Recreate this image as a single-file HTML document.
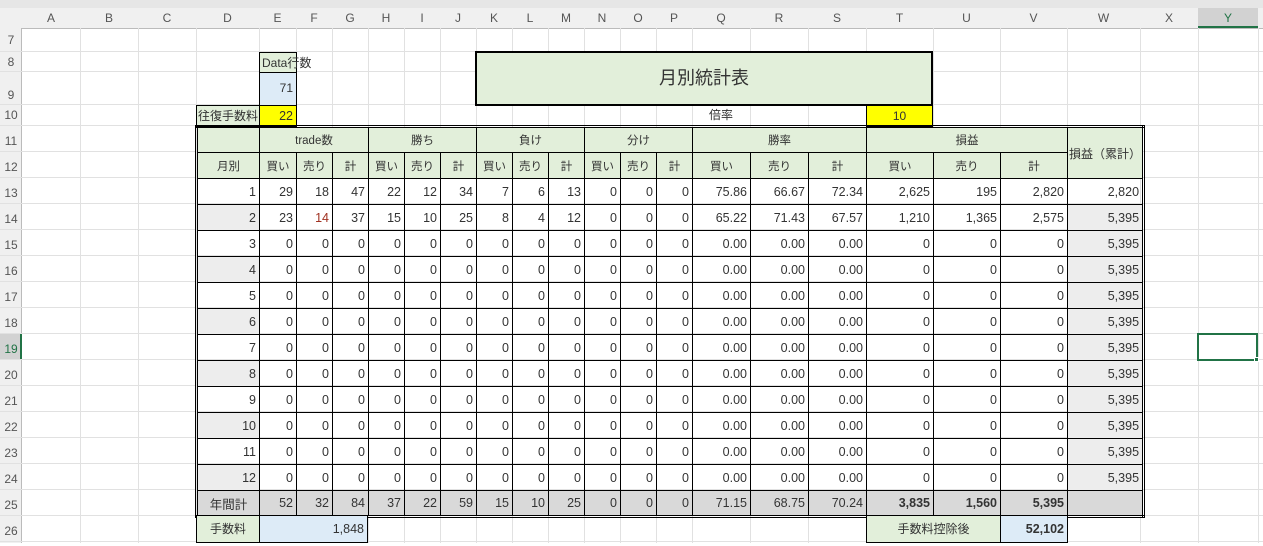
<!DOCTYPE html><html><head><meta charset="utf-8"><style>
body{margin:0;width:1263px;height:543px;overflow:hidden;background:#fff;font-family:"Liberation Sans","Noto Sans CJK JP",sans-serif;color:#333;position:relative}
.a{position:absolute;box-sizing:border-box}
.v{position:absolute;top:28px;height:515px;width:1px;background:#e1e1e1}
.h{position:absolute;left:0;width:1263px;height:1px;background:#e1e1e1}
.ch{position:absolute;top:8px;height:20px;font-size:12px;color:#555;text-align:center;line-height:20px}
.rh{position:absolute;left:0;width:22px;font-size:12px;color:#555;text-align:center}
table{border-collapse:collapse;table-layout:fixed;position:absolute;left:195px;top:125px;border:3px double #000}
td{border:1px solid #000;height:26px;padding:0 3px;font-size:12.5px;text-align:right;white-space:nowrap;overflow:hidden;box-sizing:border-box}
.g td,td.g{background:#e2efda;text-align:center;font-size:11.5px}
td.m{background:#ededed}
tr.t td{background:#d9d9d9}
td.b{font-weight:bold}
</style></head><body>
<div class="a" style="left:0;top:0;width:1263px;height:8px;background:#e6e6e6"></div>
<div class="a" style="left:0;top:8px;width:1263px;height:21px;background:#f0f0f0;border-bottom:1px solid #bbb"></div>
<div class="a" style="left:0;top:28px;width:22px;height:515px;background:#f0f0f0;border-right:1px solid #bbb"></div>
<div class="a" style="left:1198px;top:8px;width:60px;height:20px;background:#d2d2d2;border-bottom:2px solid #217346"></div>
<div class="a" style="left:0;top:334px;width:22px;height:26px;background:#d2d2d2;border-right:2px solid #217346"></div>
<div class="ch" style="left:22px;width:58px">A</div><div class="ch" style="left:80px;width:58px">B</div><div class="ch" style="left:138px;width:58px">C</div><div class="ch" style="left:196px;width:63px">D</div><div class="ch" style="left:259px;width:37px">E</div><div class="ch" style="left:296px;width:36px">F</div><div class="ch" style="left:332px;width:36px">G</div><div class="ch" style="left:368px;width:36px">H</div><div class="ch" style="left:404px;width:36px">I</div><div class="ch" style="left:440px;width:36px">J</div><div class="ch" style="left:476px;width:36px">K</div><div class="ch" style="left:512px;width:36px">L</div><div class="ch" style="left:548px;width:36px">M</div><div class="ch" style="left:584px;width:36px">N</div><div class="ch" style="left:620px;width:36px">O</div><div class="ch" style="left:656px;width:36px">P</div><div class="ch" style="left:692px;width:58px">Q</div><div class="ch" style="left:750px;width:58px">R</div><div class="ch" style="left:808px;width:58px">S</div><div class="ch" style="left:866px;width:67px">T</div><div class="ch" style="left:933px;width:67px">U</div><div class="ch" style="left:1000px;width:67px">V</div><div class="ch" style="left:1067px;width:73px">W</div><div class="ch" style="left:1140px;width:58px">X</div><div class="ch" style="left:1198px;width:60px;color:#217346">Y</div>
<div class="v" style="left:80px"></div><div class="v" style="left:138px"></div><div class="v" style="left:196px"></div><div class="v" style="left:259px"></div><div class="v" style="left:296px"></div><div class="v" style="left:332px"></div><div class="v" style="left:368px"></div><div class="v" style="left:404px"></div><div class="v" style="left:440px"></div><div class="v" style="left:476px"></div><div class="v" style="left:512px"></div><div class="v" style="left:548px"></div><div class="v" style="left:584px"></div><div class="v" style="left:620px"></div><div class="v" style="left:656px"></div><div class="v" style="left:692px"></div><div class="v" style="left:750px"></div><div class="v" style="left:808px"></div><div class="v" style="left:866px"></div><div class="v" style="left:933px"></div><div class="v" style="left:1000px"></div><div class="v" style="left:1067px"></div><div class="v" style="left:1140px"></div><div class="v" style="left:1198px"></div><div class="v" style="left:1258px"></div>
<div class="h" style="top:51px"></div><div class="h" style="top:71px"></div><div class="h" style="top:104px"></div><div class="h" style="top:125px"></div><div class="h" style="top:151px"></div><div class="h" style="top:177px"></div><div class="h" style="top:203px"></div><div class="h" style="top:229px"></div><div class="h" style="top:255px"></div><div class="h" style="top:281px"></div><div class="h" style="top:307px"></div><div class="h" style="top:333px"></div><div class="h" style="top:359px"></div><div class="h" style="top:385px"></div><div class="h" style="top:411px"></div><div class="h" style="top:437px"></div><div class="h" style="top:463px"></div><div class="h" style="top:489px"></div><div class="h" style="top:515px"></div><div class="h" style="top:541px"></div>
<div class="rh" style="top:29px;line-height:23px">7</div><div class="rh" style="top:52px;line-height:20px">8</div><div class="rh" style="top:72px;line-height:46px">9</div><div class="rh" style="top:105px;line-height:21px">10</div>
<div class="rh" style="top:126px;line-height:30px">11</div><div class="rh" style="top:152px;line-height:30px">12</div><div class="rh" style="top:178px;line-height:30px">13</div><div class="rh" style="top:204px;line-height:30px">14</div><div class="rh" style="top:230px;line-height:30px">15</div><div class="rh" style="top:256px;line-height:30px">16</div><div class="rh" style="top:282px;line-height:30px">17</div><div class="rh" style="top:308px;line-height:30px">18</div><div class="rh" style="top:334px;line-height:30px;color:#217346">19</div><div class="rh" style="top:360px;line-height:30px">20</div><div class="rh" style="top:386px;line-height:30px">21</div><div class="rh" style="top:412px;line-height:30px">22</div><div class="rh" style="top:438px;line-height:30px">23</div><div class="rh" style="top:464px;line-height:30px">24</div><div class="rh" style="top:490px;line-height:30px">25</div><div class="rh" style="top:516px;line-height:30px">26</div>
<div class="a" style="left:259px;top:52px;width:38px;height:21px;background:#e2efda;border:1px solid #000;border-bottom:none;font-size:12px;line-height:20px;padding-left:2px;white-space:nowrap">Data行数</div>
<div class="a" style="left:259px;top:72px;width:38px;height:34px;background:#ddebf7;border:1px solid #000;font-size:12px;text-align:right;padding:4px 3px 0 0;line-height:22px">71</div>
<div class="a" style="left:196px;top:105px;width:64px;height:22px;background:#e2efda;border:1px solid #000;font-size:12px;line-height:20px;padding-left:1px;white-space:nowrap">往復手数料</div>
<div class="a" style="left:259px;top:105px;width:38px;height:22px;background:#ff0;border:1px solid #000;font-size:12.5px;line-height:20px;text-align:right;padding-right:3px">22</div>
<div class="a" style="left:475px;top:51px;width:458px;height:55px;background:#e2efda;border:2px solid #000;font-size:18px;line-height:51px;text-align:center">月別統計表</div>
<div class="a" style="left:692px;top:105px;width:58px;height:21px;font-size:12px;line-height:21px;text-align:center">倍率</div>
<div class="a" style="left:866px;top:105px;width:67px;height:22px;background:#ff0;border:1px solid #000;font-size:12px;line-height:20px;text-align:center">10</div>
<table>
<colgroup><col style="width:63px"><col style="width:37px"><col style="width:36px"><col style="width:36px"><col style="width:36px"><col style="width:36px"><col style="width:36px"><col style="width:36px"><col style="width:36px"><col style="width:36px"><col style="width:36px"><col style="width:36px"><col style="width:36px"><col style="width:58px"><col style="width:58px"><col style="width:58px"><col style="width:67px"><col style="width:67px"><col style="width:67px"><col style="width:67px"></colgroup>
<tr class="g"><td></td><td colspan="3">trade数</td><td colspan="3">勝ち</td><td colspan="3">負け</td><td colspan="3">分け</td><td colspan="3">勝率</td><td colspan="3">損益</td><td rowspan="2" style="text-align:left;padding:0 1px;font-size:12px">損益（累計）</td></tr>
<tr class="g"><td>月別</td><td>買い</td><td>売り</td><td>計</td><td>買い</td><td>売り</td><td>計</td><td>買い</td><td>売り</td><td>計</td><td>買い</td><td>売り</td><td>計</td><td>買い</td><td>売り</td><td>計</td><td>買い</td><td>売り</td><td>計</td></tr>
<tr><td>1</td><td>29</td><td>18</td><td>47</td><td>22</td><td>12</td><td>34</td><td>7</td><td>6</td><td>13</td><td>0</td><td>0</td><td>0</td><td>75.86</td><td>66.67</td><td>72.34</td><td>2,625</td><td>195</td><td>2,820</td><td>2,820</td></tr>
<tr><td class="m">2</td><td>23</td><td style="color:#a03020">14</td><td>37</td><td>15</td><td>10</td><td>25</td><td>8</td><td>4</td><td>12</td><td>0</td><td>0</td><td>0</td><td>65.22</td><td>71.43</td><td>67.57</td><td>1,210</td><td>1,365</td><td>2,575</td><td class="m">5,395</td></tr>
<tr><td>3</td><td>0</td><td>0</td><td>0</td><td>0</td><td>0</td><td>0</td><td>0</td><td>0</td><td>0</td><td>0</td><td>0</td><td>0</td><td>0.00</td><td>0.00</td><td>0.00</td><td>0</td><td>0</td><td>0</td><td class="m">5,395</td></tr>
<tr><td class="m">4</td><td>0</td><td>0</td><td>0</td><td>0</td><td>0</td><td>0</td><td>0</td><td>0</td><td>0</td><td>0</td><td>0</td><td>0</td><td>0.00</td><td>0.00</td><td>0.00</td><td>0</td><td>0</td><td>0</td><td class="m">5,395</td></tr>
<tr><td>5</td><td>0</td><td>0</td><td>0</td><td>0</td><td>0</td><td>0</td><td>0</td><td>0</td><td>0</td><td>0</td><td>0</td><td>0</td><td>0.00</td><td>0.00</td><td>0.00</td><td>0</td><td>0</td><td>0</td><td class="m">5,395</td></tr>
<tr><td class="m">6</td><td>0</td><td>0</td><td>0</td><td>0</td><td>0</td><td>0</td><td>0</td><td>0</td><td>0</td><td>0</td><td>0</td><td>0</td><td>0.00</td><td>0.00</td><td>0.00</td><td>0</td><td>0</td><td>0</td><td class="m">5,395</td></tr>
<tr><td>7</td><td>0</td><td>0</td><td>0</td><td>0</td><td>0</td><td>0</td><td>0</td><td>0</td><td>0</td><td>0</td><td>0</td><td>0</td><td>0.00</td><td>0.00</td><td>0.00</td><td>0</td><td>0</td><td>0</td><td class="m">5,395</td></tr>
<tr><td class="m">8</td><td>0</td><td>0</td><td>0</td><td>0</td><td>0</td><td>0</td><td>0</td><td>0</td><td>0</td><td>0</td><td>0</td><td>0</td><td>0.00</td><td>0.00</td><td>0.00</td><td>0</td><td>0</td><td>0</td><td class="m">5,395</td></tr>
<tr><td>9</td><td>0</td><td>0</td><td>0</td><td>0</td><td>0</td><td>0</td><td>0</td><td>0</td><td>0</td><td>0</td><td>0</td><td>0</td><td>0.00</td><td>0.00</td><td>0.00</td><td>0</td><td>0</td><td>0</td><td class="m">5,395</td></tr>
<tr><td class="m">10</td><td>0</td><td>0</td><td>0</td><td>0</td><td>0</td><td>0</td><td>0</td><td>0</td><td>0</td><td>0</td><td>0</td><td>0</td><td>0.00</td><td>0.00</td><td>0.00</td><td>0</td><td>0</td><td>0</td><td class="m">5,395</td></tr>
<tr><td>11</td><td>0</td><td>0</td><td>0</td><td>0</td><td>0</td><td>0</td><td>0</td><td>0</td><td>0</td><td>0</td><td>0</td><td>0</td><td>0.00</td><td>0.00</td><td>0.00</td><td>0</td><td>0</td><td>0</td><td class="m">5,395</td></tr>
<tr><td class="m">12</td><td>0</td><td>0</td><td>0</td><td>0</td><td>0</td><td>0</td><td>0</td><td>0</td><td>0</td><td>0</td><td>0</td><td>0</td><td>0.00</td><td>0.00</td><td>0.00</td><td>0</td><td>0</td><td>0</td><td class="m">5,395</td></tr>
<tr class="t"><td style="text-align:center">年間計</td><td>52</td><td>32</td><td>84</td><td>37</td><td>22</td><td>59</td><td>15</td><td>10</td><td>25</td><td>0</td><td>0</td><td>0</td><td>71.15</td><td>68.75</td><td>70.24</td><td class="b">3,835</td><td class="b">1,560</td><td class="b">5,395</td><td></td></tr>
</table>
<div class="a" style="left:196px;top:515px;width:64px;height:28px;background:#e2efda;border:1px solid #000;font-size:12px;line-height:26px;text-align:center">手数料</div>
<div class="a" style="left:259px;top:515px;width:109px;height:28px;background:#ddebf7;border:1px solid #000;font-size:12.5px;line-height:26px;text-align:right;padding-right:3px">1,848</div>
<div class="a" style="left:866px;top:515px;width:135px;height:28px;background:#e2efda;border:1px solid #000;font-size:12px;line-height:26px;text-align:center">手数料控除後</div>
<div class="a" style="left:1000px;top:515px;width:68px;height:28px;background:#ddebf7;border:1px solid #000;font-size:12.5px;font-weight:bold;line-height:26px;text-align:right;padding-right:3px">52,102</div>
<div class="a" style="left:1197px;top:333px;width:61px;height:28px;border:2px solid #217346"></div>
<div class="a" style="left:1254px;top:357px;width:5px;height:5px;background:#217346;border:1px solid #fff"></div>
</body></html>
